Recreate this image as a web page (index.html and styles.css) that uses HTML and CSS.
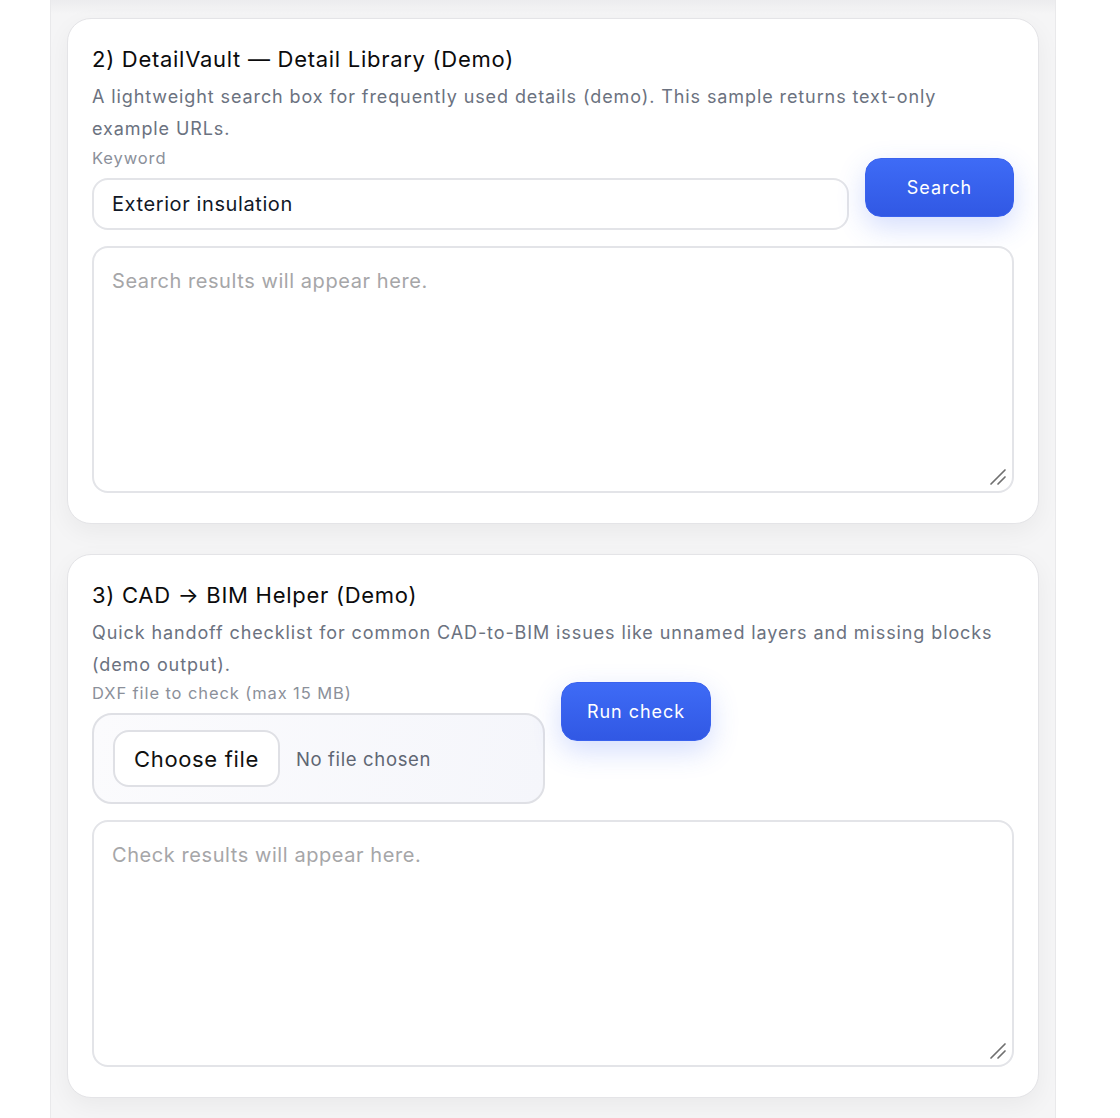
FILE: index.html
```html
<!DOCTYPE html>
<html lang="en">
<head>
<meta charset="utf-8">
<title>Tools</title>
<link rel="stylesheet" href="styles.css">
</head>
<body>
<main class="shell">
  <section class="card">
    <h2 class="card-title">2) DetailVault — Detail Library (Demo)</h2>
    <p class="card-desc">A lightweight search box for frequently used details (demo). This sample returns text-only example URLs.</p>
    <div class="row row-center">
      <div class="field grow">
        <label class="field-label" for="kw">Keyword</label>
        <input id="kw" class="text-input" type="text" value="Exterior insulation">
      </div>
      <button class="btn-primary btn-search" type="button">Search</button>
    </div>
    <div class="output-wrap">
      <textarea class="output" placeholder="Search results will appear here."></textarea>
      <svg class="grip" width="18" height="18" viewBox="0 0 18 18" aria-hidden="true"><path d="M2 16 L16 2 M9 16 L16 9" stroke="#707070" stroke-width="1.7" stroke-linecap="round" fill="none"/></svg>
    </div>
  </section>

  <section class="card">
    <h2 class="card-title">3) CAD → BIM Helper (Demo)</h2>
    <p class="card-desc">Quick handoff checklist for common CAD-to-BIM issues like unnamed layers and missing blocks (demo output).</p>
    <div class="row row-start">
      <div class="field">
        <span class="field-label">DXF file to check (max 15 MB)</span>
        <div class="file-box">
          <button class="file-btn" type="button">Choose file</button>
          <span class="file-name">No file chosen</span>
        </div>
      </div>
      <button class="btn-primary btn-run" type="button">Run check</button>
    </div>
    <div class="output-wrap">
      <textarea class="output" placeholder="Check results will appear here."></textarea>
      <svg class="grip" width="18" height="18" viewBox="0 0 18 18" aria-hidden="true"><path d="M2 16 L16 2 M9 16 L16 9" stroke="#707070" stroke-width="1.7" stroke-linecap="round" fill="none"/></svg>
    </div>
  </section>
</main>
</body>
</html>
```

FILE: styles.css
```css
html, body {
  margin: 0;
  padding: 0;
  background: #ffffff;
}

body {
  font-family: Inter, "Noto Sans", "Liberation Sans", sans-serif;
  color: #111111;
}

.shell {
  box-sizing: border-box;
  width: 1006px;
  margin-left: 50px;
  padding: 18px 16px 20px;
  background: linear-gradient(#ececee 0px, #f5f5f6 14px, #f5f5f6 100%);
  border-left: 1px solid #e9e9eb;
  border-right: 1px solid #e9e9eb;
  display: flex;
  flex-direction: column;
  gap: 30px;
  min-height: 1118px;
}

.card {
  background: #ffffff;
  border: 1px solid #e4e4e7;
  border-radius: 24px;
  padding: 26px 24px 30px;
  box-shadow: 0 8px 24px rgba(0, 0, 0, 0.05);
}

.card-title {
  margin: 0;
  font-size: 22px;
  font-weight: 400;
  line-height: 29px;
  color: #0b0b0c;
  letter-spacing: 0.72px;
}

.card-desc {
  margin: 7px 0 0;
  font-size: 18px;
  line-height: 32px;
  color: #6b7280;
  letter-spacing: 0.9px;
}

.row {
  display: flex;
  gap: 16px;
  margin-top: 3px;
}

.row-center { align-items: center; }
.row-start { align-items: flex-start; margin-top: 2px; }

.field {
  display: flex;
  flex-direction: column;
}

.grow { flex: 1; }

.field-label {
  font-size: 16.5px;
  line-height: 20px;
  color: #8b909a;
  letter-spacing: 0.9px;
  margin-bottom: 10px;
}

.text-input {
  box-sizing: border-box;
  height: 52px;
  border: 2px solid #e3e4e8;
  border-radius: 16px;
  padding: 0 18px;
  font-family: inherit;
  font-size: 20px;
  color: #111827;
  background: #ffffff;
  outline: none;
  letter-spacing: 0.6px;
}

.btn-primary {
  box-sizing: border-box;
  height: 59px;
  border: 1px solid #3a62ee;
  border-radius: 16px;
  background: linear-gradient(#3e6bf6, #3158e4);
  color: #ffffff;
  font-family: inherit;
  font-size: 18px;
  letter-spacing: 0.95px;
  box-shadow: 0 10px 28px rgba(59, 99, 245, 0.22);
  cursor: pointer;
}

.btn-search { width: 149px; margin-bottom: 4px; }
.btn-run { width: 150px; margin-top: -1px; }

.file-box {
  box-sizing: border-box;
  width: 453px;
  height: 91px;
  border: 2px solid #dfe0e5;
  border-radius: 20px;
  background: linear-gradient(100deg, #fbfbfd 0%, #f5f6fb 100%);
  display: flex;
  align-items: center;
  padding: 0 19px;
  gap: 16px;
}

.file-btn {
  box-sizing: border-box;
  height: 57px;
  padding: 0 19px;
  border: 2px solid #dfe0e5;
  border-radius: 16px;
  background: #ffffff;
  font-family: inherit;
  font-size: 22px;
  color: #111111;
  letter-spacing: 0.65px;
}

.file-name {
  font-size: 18.5px;
  color: #5f6673;
  letter-spacing: 0.65px;
}

.output-wrap {
  position: relative;
  margin-top: 16px;
}

.output {
  display: block;
  box-sizing: border-box;
  width: 100%;
  height: 247px;
  border: 2px solid #e3e4e8;
  border-radius: 16px;
  padding: 20px 18px;
  font-family: inherit;
  font-size: 20px;
  line-height: 26px;
  letter-spacing: 0.57px;
  color: #111827;
  background: #ffffff;
  outline: none;
}

.output::placeholder {
  color: #a6a6a8;
}

.output::-webkit-resizer {
  background: transparent;
}

.grip {
  position: absolute;
  right: 7px;
  bottom: 7px;
  pointer-events: none;
}
```
